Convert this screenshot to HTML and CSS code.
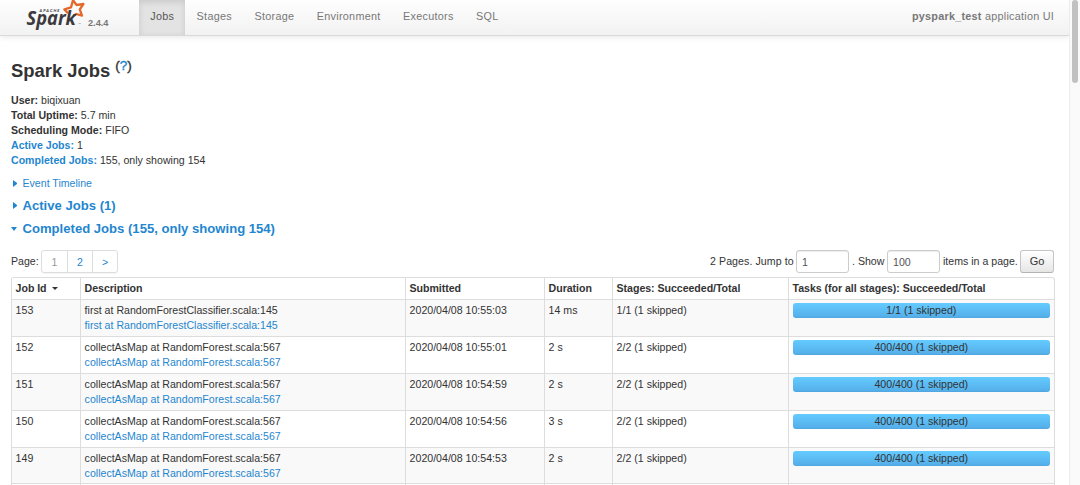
FILE: index.html
```html
<!DOCTYPE html>
<html lang="en">
<head>
<meta charset="utf-8">
<title>pyspark_test - Spark Jobs</title>
<link rel="stylesheet" href="styles.css">
</head>
<body>
<div class="page">
<header class="navbar">
  <a class="brand">
    <svg class="logo" width="60" height="32" viewBox="0 0 60 32" aria-label="Apache Spark">
      <path class="star" d="M42 13.2 L38.4 9.4 L45 7.4 L47 .2 L50.6 5 L57.4 4 L53.8 9.4 L56 15.6 L50.2 14 L48 15.6"/>
      <text class="logo-apache" x="13.5" y="12.4" textLength="20">APACHE</text>
      <text class="logo-spark" x=".5" y="25.2" textLength="49.5" lengthAdjust="spacingAndGlyphs">Spark</text>
      <text class="logo-tm" x="52" y="25">™</text>
    </svg>
    <span class="version">2.4.4</span>
  </a>
  <nav class="tabs">
    <a class="tab active">Jobs</a><a class="tab">Stages</a><a class="tab">Storage</a><a class="tab">Environment</a><a class="tab">Executors</a><a class="tab">SQL</a>
  </nav>
  <p class="app-name"><strong>pyspark_test</strong> application UI</p>
</header>
<main class="content">
  <h3 class="title">Spark Jobs <sup class="help">(<a class="link">?</a>)</sup></h3>
  <ul class="summary">
    <li><strong>User:</strong> biqixuan</li>
    <li><strong>Total Uptime:</strong> 5.7 min</li>
    <li><strong>Scheduling Mode:</strong> FIFO</li>
    <li><a class="link"><strong>Active Jobs:</strong></a> 1</li>
    <li><a class="link"><strong>Completed Jobs:</strong></a> 155, only showing 154</li>
  </ul>
  <div class="toggle timeline"><i class="arrow right"></i><span>Event Timeline</span></div>
  <h4 class="toggle heading"><i class="arrow right"></i><span>Active Jobs (1)</span></h4>
  <h4 class="toggle heading"><i class="arrow down"></i><span>Completed Jobs (155, only showing 154)</span></h4>
  <div class="paging">
    <span class="page-label">Page:</span>
    <div class="pages"><a class="page-no current">1</a><a class="page-no">2</a><a class="page-no">&gt;</a></div>
    <form class="jump">
      <span class="jump-label">2 Pages. Jump to</span><input class="field" value="1"><span class="show-label">. Show</span><input class="field" value="100"><span class="items-label">items in a page.</span><button class="go" type="button">Go</button>
    </form>
  </div>
  <table class="jobs">
    <colgroup><col class="c-id"><col class="c-desc"><col class="c-sub"><col class="c-dur"><col class="c-stages"><col class="c-tasks"></colgroup>
    <thead><tr><th>Job Id <i class="sort"></i></th><th>Description</th><th>Submitted</th><th>Duration</th><th>Stages: Succeeded/Total</th><th>Tasks (for all stages): Succeeded/Total</th></tr></thead>
    <tbody>
      <tr><td>153</td><td>first at RandomForestClassifier.scala:145<br><a class="link">first at RandomForestClassifier.scala:145</a></td><td>2020/04/08 10:55:03</td><td>14 ms</td><td>1/1 (1 skipped)</td><td><div class="progress">1/1 (1 skipped)</div></td></tr>
      <tr><td>152</td><td>collectAsMap at RandomForest.scala:567<br><a class="link">collectAsMap at RandomForest.scala:567</a></td><td>2020/04/08 10:55:01</td><td>2 s</td><td>2/2 (1 skipped)</td><td><div class="progress">400/400 (1 skipped)</div></td></tr>
      <tr><td>151</td><td>collectAsMap at RandomForest.scala:567<br><a class="link">collectAsMap at RandomForest.scala:567</a></td><td>2020/04/08 10:54:59</td><td>2 s</td><td>2/2 (1 skipped)</td><td><div class="progress">400/400 (1 skipped)</div></td></tr>
      <tr><td>150</td><td>collectAsMap at RandomForest.scala:567<br><a class="link">collectAsMap at RandomForest.scala:567</a></td><td>2020/04/08 10:54:56</td><td>3 s</td><td>2/2 (1 skipped)</td><td><div class="progress">400/400 (1 skipped)</div></td></tr>
      <tr class="short"><td>149</td><td>collectAsMap at RandomForest.scala:567<br><a class="link">collectAsMap at RandomForest.scala:567</a></td><td>2020/04/08 10:54:53</td><td>2 s</td><td>2/2 (1 skipped)</td><td><div class="progress">400/400 (1 skipped)</div></td></tr>
      <tr class="rest"><td></td><td></td><td></td><td></td><td></td><td></td></tr>
    </tbody>
  </table>
</main>
</div>
<aside class="scrollbar"><div class="thumb"></div></aside>
</body>
</html>
```
FILE: styles.css
```css
* { box-sizing: border-box; }
body {
  margin: 0;
  height: 485px;
  overflow: hidden;
  display: flex;
  background: #fff;
  color: #333;
  font: 10.6px/15px "Liberation Sans", Arial, sans-serif;
}
.page { flex: 1; min-width: 0; height: 485px; overflow: hidden; }
.scrollbar { width: 11px; background: #fafafa; border-left: 1px solid #ececec; padding: 0 1px 0 2px; }
.thumb { height: 83px; width: 6px; background: #c1c1c1; border-radius: 3px; }
.link { color: #1f86cf; }

.navbar {
  height: 36px;
  display: flex;
  align-items: stretch;
  padding: 0 15px 0 26px;
  background: linear-gradient(#fefefe, #f2f2f2);
  border-bottom: 1px solid #d9d9d9;
  box-shadow: 0 1px 6px rgba(0, 0, 0, .1);
  color: #777;
}
.brand { display: flex; width: 113px; }
.logo { flex: none; }
.logo-spark { font: italic bold 19px "Open Sans", sans-serif; fill: #3c3a3e; }
.logo-apache { font: italic bold 4px Lato, sans-serif; fill: #3c3a3e; }
.logo-tm { font: 3px "Liberation Sans", sans-serif; fill: #777; }
.star { fill: none; stroke: #e2682c; stroke-width: 2.3; stroke-linejoin: round; }
.version { margin: 16px 0 0 2px; font-size: 9.2px; font-weight: bold; }
.tabs { display: flex; }
.tab { padding: 9px 11.2px 0 11.2px; font-size: 10.8px; letter-spacing: .3px; }
.active { background: #e3e3e3; color: #555; box-shadow: inset 0 2px 6px rgba(0, 0, 0, .12); }
.app-name { margin: 9px 0 0 auto; font-size: 10.8px; letter-spacing: .26px; }

.content { padding: 18px 15px 0 11px; }
.title { margin: 0; height: 30px; font-size: 18.4px; line-height: 34px; white-space: nowrap; }
.help { font-size: 13.5px; line-height: 0; vertical-align: 7px; font-weight: normal; -webkit-text-stroke: .4px; }
.summary { list-style: none; margin: 9px 0 0; padding: 0; }
.toggle { display: flex; align-items: center; color: #1f86cf; margin: 0; }
.timeline { height: 15px; margin-top: 8px; }
.heading { height: 15px; margin-top: 8px; font-size: 13.1px; }
.timeline + .heading { margin-top: 7px; }
.arrow { flex: none; width: 11.5px; height: 7px; display: flex; justify-content: flex-start; }
.arrow::before { content: ""; border: 3.5px solid transparent; }
.right::before { border-left: 4px solid #1f86cf; border-right: 0; margin-left: 2px; }
.down::before { border-top: 4px solid #1f86cf; border-bottom: 0; margin-top: 2px; height: 0; }

.paging { display: flex; height: 23px; margin-top: 14px; }
.page-label { width: 30px; padding-top: 4px; }
.pages { display: flex; height: 23px; border: 1px solid #ddd; border-radius: 3px; box-shadow: 0 1px 1px rgba(0, 0, 0, .04); }
.page-no { width: 25px; text-align: center; line-height: 22px; color: #1f86cf; }
.page-no + .page-no { border-left: 1px solid #ddd; }
.pages .current { color: #999; }
.jump { display: flex; margin-left: auto; }
.jump span { padding-top: 4px; white-space: nowrap; }
.jump-label { width: 86px; letter-spacing: .08px; }
.show-label { width: 38px; padding-left: 3px; }
.items-label { width: 80px; padding-left: 3px; }
.field { width: 53px; height: 23px; margin: 0; border: 1px solid #ccc; border-radius: 3px; padding: 0 5px; font: inherit; color: #555; box-shadow: inset 0 1px 1px rgba(0, 0, 0, .075); }
.go { width: 34px; height: 23px; padding: 0; border: 1px solid #c5c5c5; border-bottom-color: #b3b3b3; border-radius: 3px; background: linear-gradient(#fff, #e6e6e6); color: #333; font: inherit; font-size: 11px; }

.jobs { width: 1044px; margin-top: 4px; table-layout: fixed; border-collapse: separate; border-spacing: 0; border: 1px solid #ddd; border-left: 0; border-radius: 3px; }
.c-id { width: 69px; }
.c-desc { width: 325px; }
.c-sub { width: 139px; }
.c-dur { width: 68px; }
.c-stages { width: 176px; }
.jobs th, .jobs td { padding: 3px 4px 2px 3.6px; text-align: left; vertical-align: top; border-left: 1px solid #ddd; white-space: nowrap; }
.jobs th { height: 21px; letter-spacing: -.04px; }
.jobs td { height: 37px; border-top: 1px solid #ddd; }
.jobs tbody tr:nth-child(odd) td { background: #f9f9f9; }
.jobs .short td { height: 36px; }
.jobs .rest td { height: 6px; }
.sort { display: inline-block; margin-left: 3px; vertical-align: 2px; border: 3.5px solid transparent; border-top: 3.5px solid #333; border-bottom: 0; }
.progress { height: 15px; border-radius: 3px; background: linear-gradient(#64cbff, #54ade8); text-align: center; box-shadow: inset 0 -1px 1px rgba(0, 0, 0, .04); }
```
